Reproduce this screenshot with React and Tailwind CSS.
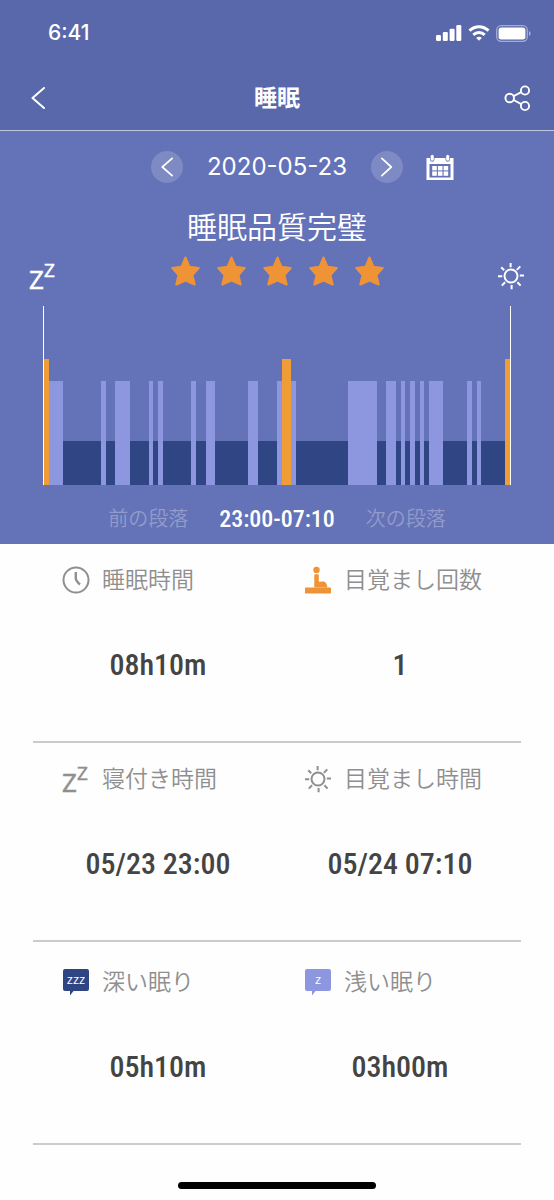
import { useState } from 'react';

const JP = "font-['Inter','Noto_Sans_CJK_JP',sans-serif]";
const NARROW = "font-['Roboto_Condensed','Roboto',sans-serif]";

// kind + length in five-minute steps, 23:00 to 07:10
const SEGMENTS = [
  ['awake', 1], ['light', 3], ['deep', 8], ['light', 1], ['deep', 2], ['light', 3],
  ['deep', 4], ['light', 1], ['deep', 1], ['light', 1], ['deep', 6], ['light', 1],
  ['deep', 2], ['light', 2], ['deep', 7], ['light', 2], ['deep', 4], ['light', 1],
  ['awake', 2], ['light', 1], ['deep', 11], ['light', 6], ['deep', 2], ['light', 2],
  ['deep', 1], ['light', 1], ['deep', 1], ['light', 1], ['deep', 1], ['light', 1],
  ['deep', 1], ['light', 3], ['deep', 5], ['light', 1], ['deep', 1], ['light', 1],
  ['deep', 5], ['awake', 1],
];

const SEGMENT_STYLE = {
  awake: 'h-[126px] bg-[#f09d37]',
  light: 'h-[104px] bg-[#8c97e0]',
  deep: 'h-[44px] bg-[#304584]',
};

// ─── Icons ────────────────────────────────────────────────────────────────────
function Chevron({ className, right }) {
  return (
    <svg className={className} viewBox="0 0 14 22" fill="none" stroke="currentColor" strokeWidth={2} strokeLinecap="round" strokeLinejoin="round">
      <path d={right ? 'M1 1l11 10L1 21' : 'M13 1L1.500 11 13 21'} />
    </svg>
  );
}

function ShareIcon() {
  return (
    <svg className="w-[27px] h-[27px]" viewBox="0 0 27 27" fill="none" stroke="currentColor" strokeWidth={1.9}>
      <circle cx="5.700" cy="13" r="4.300" />
      <circle cx="21" cy="5.500" r="4.100" />
      <circle cx="21" cy="21" r="4.100" />
      <path d="M9.600 11.100l7.700-3.900M9.600 15l7.700 4.100" />
    </svg>
  );
}

function SignalIcon() {
  return (
    <svg className="w-[26px] h-4" viewBox="0 0 26 16" fill="currentColor">
      <rect x="0" y="10" width="5" height="6" rx="1.200" />
      <rect x="6.800" y="7" width="5" height="9" rx="1.200" />
      <rect x="13.600" y="3.700" width="5" height="12.300" rx="1.200" />
      <rect x="20.300" y="0" width="5" height="16" rx="1.200" />
    </svg>
  );
}

function WifiIcon() {
  return (
    <svg className="w-[22px] h-4" viewBox="0 0 22 16" fill="none" stroke="currentColor" strokeWidth={3}>
      <path d="M1.500 5.700C7 .4 15 .4 20.500 5.700" />
      <path d="M5.300 9.800c3.300-3 8.100-3 11.400 0" />
      <path d="M8.200 12.900c1.600-1.400 4-1.400 5.600 0L11 15.800z" fill="currentColor" stroke="none" />
    </svg>
  );
}

function BatteryIcon() {
  return (
    <svg className="w-[35px] h-[17px]" viewBox="0 0 35 17" fill="none">
      <rect x=".7" y=".7" width="30.600" height="15.600" rx="4.500" stroke="currentColor" strokeOpacity=".45" strokeWidth="1.300" />
      <rect x="2.600" y="2.600" width="26.800" height="11.800" rx="2.600" fill="currentColor" />
      <path d="M33 6c2.100.7 2.100 4.300 0 5z" fill="currentColor" fillOpacity=".5" />
    </svg>
  );
}

function CalendarIcon() {
  return (
    <svg className="w-7 h-[27px]" viewBox="0 0 28 27">
      <path d="M.5 4H4v1.500a2.200 2.200 0 004.400 0V4H19.500v1.500a2.200 2.200 0 004.400 0V4h3.600v22H.5z" fill="currentColor" />
      <rect x="3.500" y="10" width="21" height="13.500" fill="#6472b8" />
      <rect x="4.700" y=".8" width="3" height="6" rx="1.500" fill="currentColor" />
      <rect x="20.200" y=".8" width="3" height="6" rx="1.500" fill="currentColor" />
      {[6.2, 11.9, 17.6].map((x) => (
        <g key={x} fill="currentColor">
          <rect x={x} y="12" width="4.600" height="4.400" />
          <rect x={x} y="17.400" width="4.600" height="4.400" />
        </g>
      ))}
    </svg>
  );
}

function StarIcon() {
  return (
    <svg className="w-[29px] h-[30px]" viewBox="0 0 29 30" fill="#ef9337" stroke="#ef9337" strokeWidth={2} strokeLinejoin="round">
      <path d="M14.500 1.500l4 9.300 9.200 1.200-6.200 7 2.200 9.500-9.200-3.900-9.200 3.900 2.200-9.500-6.200-7 9.200-1.200z" />
    </svg>
  );
}

function SleepIcon() {
  return (
    <svg className="w-7 h-7 overflow-visible font-['Open_Sans',sans-serif]" viewBox="0 0 28 28" fill="currentColor" stroke="currentColor" strokeWidth=".5" fontWeight="400">
      <text x="0" y="27" fontSize="26">Z</text>
      <text x="15" y="15" fontSize="19">Z</text>
    </svg>
  );
}

function SunIcon() {
  return (
    <svg className="w-7 h-7" viewBox="0 0 28 28" fill="none" stroke="currentColor" strokeWidth={2}>
      <circle cx="14" cy="14" r="6.500" />
      <path d="M13.600 1v4.200M14.600 23v4.200M1 14.300h4.200M22.800 13.500H27M4.200 5.200l3 3M23.300 4.400l-3.500 3.500M4.800 23.600l3.300-3.300M20.400 20.200l3.200 3.400" />
    </svg>
  );
}

function ClockIcon() {
  return (
    <svg className="w-7 h-7" viewBox="0 0 28 28" fill="none" stroke="currentColor" strokeWidth={2}>
      <circle cx="14" cy="14" r="12.500" />
      <path d="M13.800 6v6.500c0 2.200 1.800 3.800 4.200 6" strokeWidth={2.4} />
    </svg>
  );
}

function WakeIcon() {
  return (
    <svg className="w-7 h-7" viewBox="0 0 28 28" fill="#ef9337">
      <circle cx="12.500" cy="4" r="3.200" />
      <path d="M11.300 8.300h2.500a1 1 0 011 1v6.400l4.500-.1c2 0 2.800 1.300 3.500 3.200l.6 2.700H10.300V9.300a1 1 0 011-1z" />
      <rect x="1" y="21.500" width="26" height="6" rx=".6" />
    </svg>
  );
}

function BubbleIcon({ color, label }) {
  return (
    <svg className="w-7 h-7 font-['Open_Sans',sans-serif]" viewBox="0 0 28 28">
      <path d="M3 1h22a2 2 0 012 2v18a2 2 0 01-2 2H11.500L8 27.500V23H3a2 2 0 01-2-2V3a2 2 0 012-2z" fill={color} />
      <text x="14" y="16" fontSize="13" fontWeight="500" textAnchor="middle" fill="#fff">{label}</text>
    </svg>
  );
}

// ─── Sections ─────────────────────────────────────────────────────────────────
function StatusBar() {
  return (
    <div className="flex h-[66px] items-center justify-between pl-12 pr-[23px]">
      <span className="text-[21px] font-medium leading-6">6:41</span>
      <div className="flex items-center gap-[6px]">
        <SignalIcon />
        <WifiIcon />
        <BatteryIcon />
      </div>
    </div>
  );
}

function SleepChart() {
  return (
    <div className="mx-[43px] mt-4 flex h-[179px] items-end border-x border-white">
      {SEGMENTS.map(([kind, length], i) => (
        <div key={i} className={`basis-0 ${SEGMENT_STYLE[kind]}`} style={{ flexGrow: length }} />
      ))}
    </div>
  );
}

function Stat({ icon, label, value }) {
  return (
    <div>
      <dt className="flex h-7 items-center gap-3 pl-[25px] text-[23px] font-[350] leading-7 text-[#8f8f8f]">
        {icon}
        {label}
      </dt>
      <dd className={`mt-[51px] text-center text-[30px] font-medium leading-10 text-[#444] ${NARROW}`}>{value}</dd>
    </div>
  );
}

function StatRow({ className = 'pt-[22px]', children }) {
  return (
    <dl className={`mx-[33px] grid grid-cols-2 border-b-2 border-[#cbcbcb] pb-14 pl-1 ${className}`}>
      {children}
    </dl>
  );
}

export default function App() {
  const [date, setDate] = useState('2020-05-23');

  const shiftDay = (days) => {
    const next = new Date(`${date}T00:00:00Z`);
    next.setUTCDate(next.getUTCDate() + days);
    setDate(next.toISOString().slice(0, 10));
  };

  return (
    <div className={`min-h-screen bg-[#fefefe] ${JP}`} lang="ja">
      <header className="border-b border-[#bcc6de] bg-[#5868ab] text-white">
        <StatusBar />
        <nav className="flex h-16 items-center justify-between px-[23px]">
          <button type="button" aria-label="戻る" className="flex w-9 pl-2">
            <Chevron className="h-[22px] w-[14px]" />
          </button>
          <h1 className="text-[23px] font-bold leading-8">睡眠</h1>
          <button type="button" aria-label="共有" className="flex w-9 justify-end"><ShareIcon /></button>
        </nav>
      </header>

      <main>
        <section className="bg-[#6472b8] pb-[11px] pt-5 text-white">
          {/* Date picker */}
          <div className="grid grid-cols-[1fr_auto_1fr] items-center">
            <div className="col-start-2 flex w-[252px] items-center justify-between">
              <button type="button" aria-label="前の日" onClick={() => shiftDay(-1)} className="flex h-8 w-8 items-center justify-center rounded-full bg-[#7e8ac4]">
                <Chevron className="h-5 w-3" />
              </button>
              <time className="text-2xl leading-8">{date}</time>
              <button type="button" aria-label="次の日" onClick={() => shiftDay(1)} className="flex h-8 w-8 items-center justify-center rounded-full bg-[#7e8ac4]">
                <Chevron className="h-5 w-3" right />
              </button>
            </div>
            <button type="button" aria-label="カレンダー" className="ml-[23px] justify-self-start"><CalendarIcon /></button>
          </div>

          <h2 className="mt-6 text-center text-[30px] font-[350] leading-10">睡眠品質完璧</h2>

          <div className="mt-[9px] flex h-[34px] items-start justify-between px-[29px]">
            <div className="self-end"><SleepIcon /></div>
            <div className="flex gap-[17px]">
              {[1, 2, 3, 4, 5].map((n) => <StarIcon key={n} />)}
            </div>
            <div className="self-end"><SunIcon /></div>
          </div>

          <SleepChart />

          <div className="mt-5 flex h-7 items-center justify-center gap-[31px]">
            <button type="button" className="text-[20px] font-[350] leading-7 text-[#929ccb]">前の段落</button>
            <span className={`text-[24px] font-medium leading-7 ${NARROW}`}>23:00-07:10</span>
            <button type="button" className="text-[20px] font-[350] leading-7 text-[#929ccb]">次の段落</button>
          </div>
        </section>

        <StatRow>
          <Stat icon={<ClockIcon />} label="睡眠時間" value="08h10m" />
          <Stat icon={<WakeIcon />} label="目覚まし回数" value="1" />
        </StatRow>
        <StatRow>
          <Stat icon={<SleepIcon />} label="寝付き時間" value="05/23 23:00" />
          <Stat icon={<SunIcon />} label="目覚まし時間" value="05/24 07:10" />
        </StatRow>
        <StatRow className="pt-[26px]">
          <Stat icon={<BubbleIcon color="#304584" label="zzz" />} label="深い眠り" value="05h10m" />
          <Stat icon={<BubbleIcon color="#8c97e0" label="z" />} label="浅い眠り" value="03h00m" />
        </StatRow>
      </main>

      <div className="mx-auto mt-[37px] h-[7px] w-[198px] rounded-full bg-black" />
    </div>
  );
}
